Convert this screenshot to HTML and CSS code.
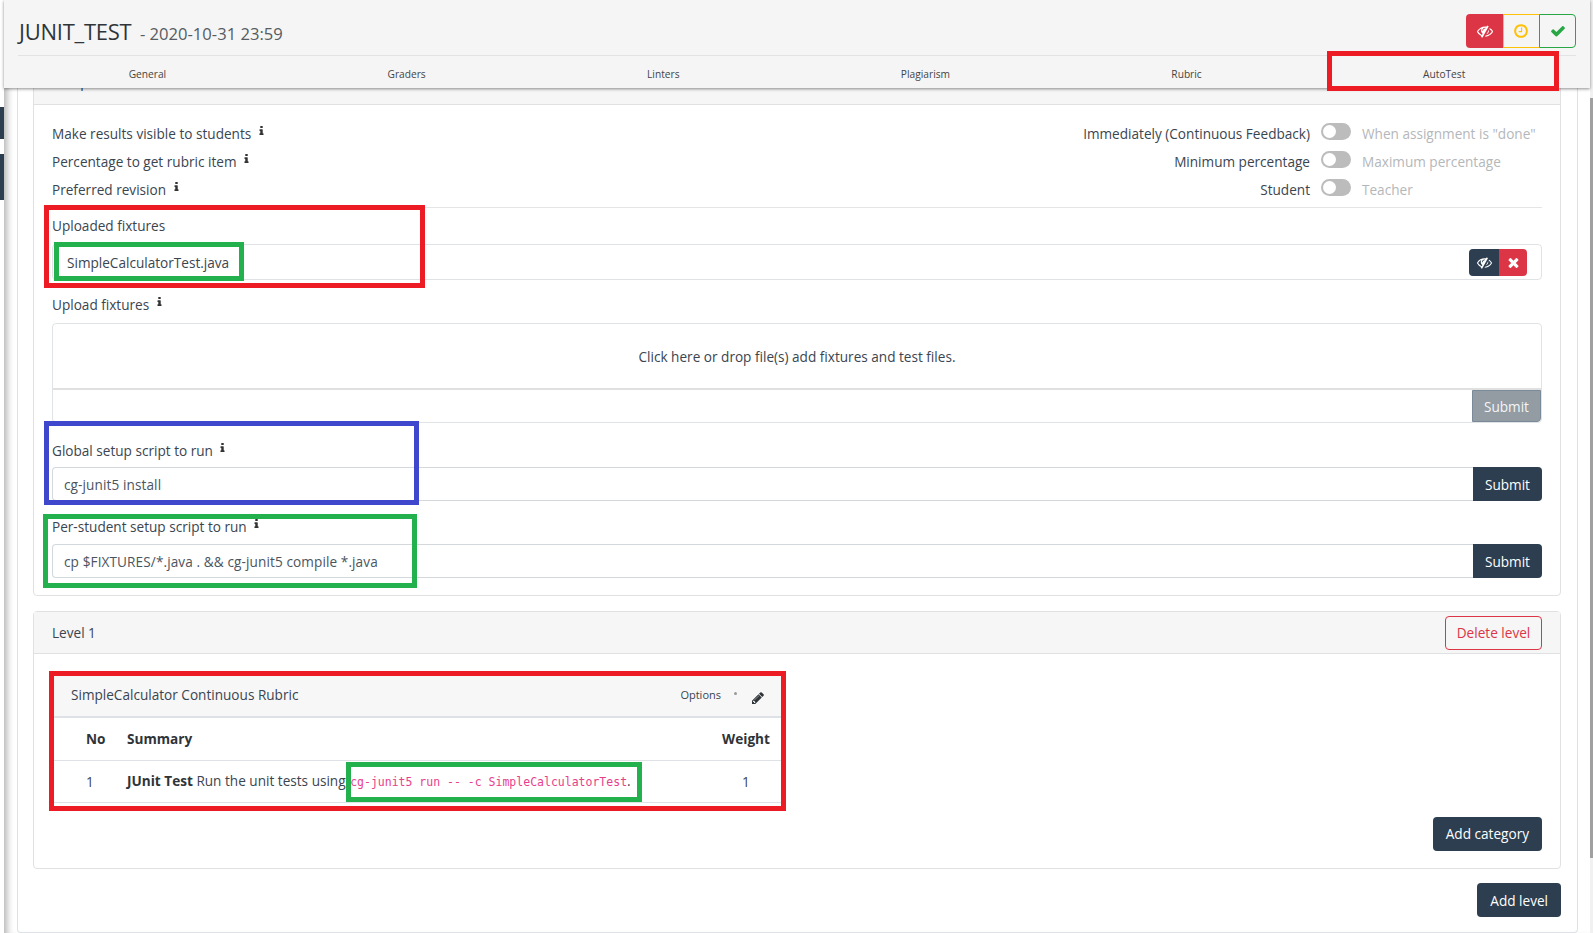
FILE: index.html
```html
<!DOCTYPE html>
<html lang="en">
<head>
    <meta charset="UTF-8">
    <meta name="viewport" content="width=device-width, initial-scale=1.0">
    <title>JUNIT_TEST</title>
    <link rel="stylesheet" href="styles.css">
</head>
<body>
    <svg class="defs" xmlns="http://www.w3.org/2000/svg">
        <symbol id="i-eye-slash" viewBox="0 0 1792 1792"><path d="M555 1335l78-141q-87-63-136-159t-49-203q0-121 61-225-229 117-381 353 167 258 427 375zm389-759q0-20-14-34t-34-14q-125 0-214.5 89.5t-89.5 214.5q0 20 14 34t34 14 34-14 14-34q0-86 61-147t147-61q20 0 34-14t14-34zm363-191q0 7-1 9-105 188-315 566t-316 567l-49 89q-10 16-28 16-12 0-134-70-16-10-16-28 0-12 44-87-143-65-263.5-173t-208.5-245q-20-31-20-69t20-69q153-235 380-371t496-136q89 0 180 17l54-97q10-16 28-16 5 0 18 6t31 15.5 33 18.5 31.5 18.5 19.5 11.5q16 10 16 27zm37 447q0 139-79 253.5t-209 164.5l280-502q8 45 8 84zm448 128q0 35-20 69-39 64-109 145-150 172-347.5 267t-419.5 95l74-132q212-18 392.5-137t301.5-307q-115-179-282-294l63-112q95 64 182.5 153t144.5 184q20 34 20 69z"/></symbol>
        <symbol id="i-clock" viewBox="0 0 1792 1792"><path d="M1024 544v448q0 14-9 23t-23 9h-320q-14 0-23-9t-9-23v-64q0-14 9-23t23-9h224v-352q0-14 9-23t23-9h64q14 0 23 9t9 23zm416 352q0-148-73-273t-198-198-273-73-273 73-198 198-73 273 73 273 198 198 273 73 273-73 198-198 73-273zm224 0q0 209-103 385.5t-279.5 279.5-385.5 103-385.5-103-279.5-279.5-103-385.5 103-385.5 279.5-279.5 385.5-103 385.5 103 279.5 279.5 103 385.5z"/></symbol>
        <symbol id="i-check" viewBox="0 0 1792 1792"><path d="M1671 566q0 40-28 68l-724 724-136 136q-28 28-68 28t-68-28l-136-136-362-362q-28-28-28-68t28-68l136-136q28-28 68-28t68 28l294 295 656-657q28-28 68-28t68 28l136 136q28 28 28 68z"/></symbol>
        <symbol id="i-times" viewBox="0 0 1792 1792"><path d="M1490 1322q0 40-28 68l-136 136q-28 28-68 28t-68-28l-294-294-294 294q-28 28-68 28t-68-28l-136-136q-28-28-28-68t28-68l294-294-294-294q-28-28-28-68t28-68l136-136q28-28 68-28t68 28l294 294 294-294q28-28 68-28t68 28l136 136q28 28 28 68t-28 68l-294 294 294 294q28 28 28 68z"/></symbol>
        <symbol id="i-pencil" viewBox="0 0 1792 1792"><path d="M491 1536l91-91-235-235-91 91v107h128v128h107zm523-928q0-22-22-22-10 0-17 7l-542 542q-7 7-7 17 0 22 22 22 10 0 17-7l542-542q7-7 7-17zm-54-192l416 416-832 832h-416v-416zm683 96q0 53-37 90l-166 166-416-416 166-165q36-38 90-38 53 0 91 38l235 234q37 39 37 91z"/></symbol>
        <symbol id="i-info" viewBox="512 128 768 1408"><path d="M1216 1344v128q0 26-19 45t-45 19h-512q-26 0-45-19t-19-45v-128q0-26 19-45t45-19h64v-384h-64q-26 0-45-19t-19-45v-128q0-26 19-45t45-19h384q26 0 45 19t19 45v576h64q26 0 45 19t19 45zm-128-1152v192q0 26-19 45t-45 19h-256q-26 0-45-19t-19-45v-192q0-26 19-45t45-19h256q26 0 45 19t19 45z"/></symbol>
    </svg>

    <div class="app">
        <div class="sidebar">
            <div class="side-item side-one"></div>
            <div class="side-item side-two"></div>
        </div>

        <div class="main">
            <header class="top">
                <div class="top-row">
                    <h1 class="title">JUNIT_TEST <small>- 2020-10-31 23:59</small></h1>
                    <div class="state-btns">
                        <span class="state state-hidden"><svg class="icon"><use href="#i-eye-slash"/></svg></span>
                        <span class="state state-wait"><svg class="icon"><use href="#i-clock"/></svg></span>
                        <span class="state state-done"><svg class="icon"><use href="#i-check"/></svg></span>
                    </div>
                </div>
                <nav class="tabs">
                    <a>General</a>
                    <a>Graders</a>
                    <a>Linters</a>
                    <a>Plagiarism</a>
                    <a>Rubric</a>
                    <a>AutoTest</a>
                </nav>
            </header>

            <div class="sheet">
                <section class="card card-setup">
                    <div class="card-head card-head-setup">Setup</div>
                    <div class="card-body setup-body">
                        <div class="opt-row">
                            <span class="opt-name">Make results visible to students <svg class="info"><use href="#i-info"/></svg></span>
                            <span class="opt-on">Immediately (Continuous Feedback)</span>
                            <span class="toggle"></span>
                            <span class="opt-off">When assignment is "done"</span>
                        </div>
                        <div class="opt-row">
                            <span class="opt-name">Percentage to get rubric item <svg class="info"><use href="#i-info"/></svg></span>
                            <span class="opt-on">Minimum percentage</span>
                            <span class="toggle"></span>
                            <span class="opt-off">Maximum percentage</span>
                        </div>
                        <div class="opt-row">
                            <span class="opt-name">Preferred revision <svg class="info"><use href="#i-info"/></svg></span>
                            <span class="opt-on">Student</span>
                            <span class="toggle"></span>
                            <span class="opt-off">Teacher</span>
                        </div>

                        <label class="field-label label-uploaded">Uploaded fixtures</label>
                        <div class="file-box">
                            <span class="file-name">SimpleCalculatorTest.java</span>
                            <div class="file-btns">
                                <span class="file-btn file-hide"><svg class="icon"><use href="#i-eye-slash"/></svg></span>
                                <span class="file-btn file-del"><svg class="icon"><use href="#i-times"/></svg></span>
                            </div>
                        </div>

                        <label class="field-label label-upload">Upload fixtures <svg class="info"><use href="#i-info"/></svg></label>
                        <div class="drop">
                            <div class="drop-zone">Click here or drop file(s) add fixtures and test files.</div>
                            <div class="drop-foot"><button class="btn btn-off">Submit</button></div>
                        </div>

                        <label class="field-label label-global">Global setup script to run <svg class="info"><use href="#i-info"/></svg></label>
                        <div class="input-group">
                            <div class="input">cg-junit5 install</div>
                            <button class="btn btn-joined">Submit</button>
                        </div>

                        <label class="field-label label-student">Per-student setup script to run <svg class="info"><use href="#i-info"/></svg></label>
                        <div class="input-group">
                            <div class="input">cp $FIXTURES/*.java . &amp;&amp; cg-junit5 compile *.java</div>
                            <button class="btn btn-joined">Submit</button>
                        </div>
                    </div>
                </section>

                <section class="card card-level">
                    <div class="card-head card-head-level">
                        <span>Level 1</span>
                        <button class="btn btn-danger">Delete level</button>
                    </div>
                    <div class="card-body level-body">
                        <div class="rubric">
                            <div class="rubric-head">
                                <span class="rubric-name">SimpleCalculator Continuous Rubric</span>
                                <span class="rubric-options">Options</span>
                                <span class="rubric-dot"></span>
                                <svg class="pencil"><use href="#i-pencil"/></svg>
                            </div>
                            <table class="rubric-table">
                                <tr>
                                    <th class="col-no">No</th>
                                    <th>Summary</th>
                                    <th class="col-weight">Weight</th>
                                </tr>
                                <tr>
                                    <td class="col-no">1</td>
                                    <td><b>JUnit Test</b> Run the unit tests using <code>cg-junit5 run -- -c SimpleCalculatorTest</code>.</td>
                                    <td class="col-weight">1</td>
                                </tr>
                            </table>
                        </div>
                        <div class="level-foot"><button class="btn">Add category</button></div>
                    </div>
                </section>

                <div class="page-foot"><button class="btn">Add level</button></div>
            </div>
        </div>

        <div class="scrollbar"><div class="scroll-thumb"></div></div>

        <!-- annotation boxes drawn on top of the screenshot -->
        <div class="mark mark-red mark-tab"></div>
        <div class="mark mark-red mark-uploaded"></div>
        <div class="mark mark-green mark-file"></div>
        <div class="mark mark-blue mark-global"></div>
        <div class="mark mark-green mark-student"></div>
        <div class="mark mark-red mark-rubric"></div>
        <div class="mark mark-green mark-code"></div>
    </div>
</body>
</html>
```

FILE: styles.css
```css
* {
    box-sizing: border-box;
}
body {
    margin: 0;
    font-family: "Open Sans", "Liberation Sans", sans-serif;
    font-size: 13.6px;
    line-height: 21px;
    color: #3a4550;
    background: #fff;
}
.defs {
    display: none;
}
.app {
    position: relative;
    display: flex;
    height: 933px;
    overflow: hidden;
}

/* left menu peeking out */
.sidebar {
    width: 4px;
    flex: none;
    padding-top: 107px;
}
.side-item {
    background: #2c3e50;
}
.side-one {
    height: 32px;
    margin-bottom: 15px;
}
.side-two {
    height: 46px;
}

.scrollbar {
    width: 3px;
    flex: none;
    padding-top: 98px;
    background: #f1f1f1;
}
.scroll-thumb {
    height: 760px;
    background: #a0a0a0;
}

.main {
    position: relative;
    flex: 1;
    min-width: 0;
    padding: 0 12px 0 13px;
    box-shadow: inset 8px 0 7px -5px rgba(0, 0, 0, 0.3);
}

/* sticky header */
.top {
    position: absolute;
    top: 0;
    left: 0;
    right: 0;
    z-index: 2;
    height: 88px;
    padding: 0 14px;
    background: #f5f5f5;
    box-shadow: 0 1px 3px rgba(0, 0, 0, 0.45);
}
.top-row {
    display: flex;
    align-items: flex-start;
    justify-content: space-between;
    height: 56px;
    padding-top: 14px;
    border-bottom: 1px solid #e2e3e4;
}
.title {
    margin: 0;
    padding-left: 1px;
    font-size: 22px;
    font-weight: 400;
    line-height: 35px;
    color: #2f3438;
    letter-spacing: -0.25px;
}
.title small {
    margin-left: 3px;
    font-size: 16.6px;
    color: #555c62;
    letter-spacing: 0;
}
.state-btns {
    display: flex;
    height: 34px;
}
.state {
    display: flex;
    align-items: center;
    justify-content: center;
    height: 34px;
    width: 37px;
}
.state-hidden {
    background: #dc3545;
    color: #fff;
    border-radius: 4px 0 0 4px;
}
.state-wait {
    width: 36px;
    padding-right: 2px;
    border: 1px solid #ffc107;
    border-right: 0;
    color: #ffc107;
}
.state-done {
    border: 1px solid #28a745;
    color: #28a745;
    border-radius: 0 4px 4px 0;
}
.icon {
    width: 16px;
    height: 16px;
    fill: currentColor;
}
.tabs {
    display: flex;
    height: 32px;
}
.tabs a {
    flex: 1 1 auto;
    font-size: 10.2px;
    line-height: 36px;
    text-align: center;
    color: #444;
}

.sheet {
    height: 933px;
    padding: 62px 16px 0 15px;
    border: 1px solid #dee2e6;
    border-top: 0;
    border-radius: 0 0 4px 4px;
}
.card {
    border: 1px solid #dfe1e3;
    border-radius: 4px;
    background: #fff;
}
.card-head {
    background: #f6f6f6;
    border-bottom: 1px solid #dfe1e3;
}
.card-head-setup {
    height: 42px;
    padding: 8px 18px;
}
.card-body {
    padding: 0 18px;
}
.setup-body {
    height: 490px;
    padding-top: 14px;
}

.opt-row {
    display: flex;
    align-items: center;
    height: 28px;
}
.opt-name {
    flex: 1;
}
.opt-on {
    text-align: right;
}
.opt-off {
    width: 180px;
    color: #b4b7ba;
}
.toggle {
    position: relative;
    width: 30px;
    height: 17px;
    margin: -3px 11px 0;
    border-radius: 9px;
    background: #bcbcbc;
}
.toggle::before {
    content: "";
    position: absolute;
    top: 2px;
    left: 2px;
    width: 13px;
    height: 13px;
    border-radius: 50%;
    background: #fff;
}
.info {
    width: 5px;
    height: 9px;
    margin-left: 4px;
    vertical-align: 4px;
    fill: #333;
}

.field-label {
    display: block;
    height: 21px;
}
.label-uploaded {
    margin-top: 4px;
    padding-top: 7px;
    height: 34px;
    border-top: 1px solid #e3e5e7;
}
.file-box {
    display: flex;
    align-items: center;
    justify-content: space-between;
    height: 36px;
    margin-top: 3px;
    padding: 0 14px 0 14px;
    border: 1px solid #e0e3e6;
    border-radius: 4px;
}
.file-btns {
    display: flex;
    height: 27px;
}
.file-btn {
    display: flex;
    align-items: center;
    justify-content: center;
    width: 28px;
    color: #fff;
}
.file-hide {
    width: 30px;
    background: #2c3e50;
    border-radius: 4px 0 0 4px;
}
.file-del {
    background: #dc3545;
    border-radius: 0 4px 4px 0;
}
.file-btn .icon {
    width: 15px;
    height: 15px;
}
.label-upload {
    margin-top: 14px;
}
.drop {
    margin-top: 8px;
    border: 1px solid #e0e3e6;
    border-radius: 4px;
}
.drop-zone {
    height: 66px;
    line-height: 66px;
    text-align: center;
    border-bottom: 2px solid #e0e0e0;
}
.drop-foot {
    display: flex;
    justify-content: flex-end;
    height: 32px;
}
.btn {
    height: 34px;
    padding: 0 13px;
    border: 0;
    border-radius: 4px;
    font-family: inherit;
    font-size: 13.6px;
    color: #fff;
    background: #2c3e50;
}
.btn-off {
    width: 69px;
    height: 32px;
    padding: 0;
    border: 1px solid #7b8a99;
    border-radius: 0 0 4px 0;
    background: #939ba3;
    color: #f4f5f6;
}
.btn-joined {
    width: 69px;
    padding: 0;
    border-radius: 0 4px 4px 0;
}
.label-global {
    margin-top: 17px;
}
.label-student {
    margin-top: 15px;
}
.input-group {
    display: flex;
    margin-top: 7px;
}
.label-global + .input-group {
    margin-top: 6px;
}
.input {
    flex: 1;
    height: 34px;
    padding: 0 11px;
    line-height: 34px;
    letter-spacing: 0.1px;
    border: 1px solid #d3d8dd;
    border-right: 0;
    border-radius: 4px 0 0 4px;
    color: #4b555e;
}

.card-level {
    margin-top: 15px;
    height: 258px;
}
.card-head-level {
    display: flex;
    align-items: center;
    justify-content: space-between;
    height: 42px;
    padding: 0 18px;
}
.btn-danger {
    width: 97px;
    height: 34px;
    padding: 0;
    border: 1px solid #dc3545;
    background: transparent;
    color: #dc3545;
}
.level-body {
    padding-top: 22px;
}
.rubric {
    width: 729px;
    margin-left: 2px;
}
.rubric-head {
    display: flex;
    align-items: center;
    height: 42px;
    padding: 0 18px 3px 17px;
    background: #f7f7f7;
    border-bottom: 2px solid #dee2e6;
}
.rubric-name {
    flex: 1;
}
.rubric-options {
    font-size: 11px;
}
.rubric-dot {
    width: 3px;
    height: 3px;
    margin: 0 14px 3px 13px;
    background: #999;
    border-radius: 50%;
}
.pencil {
    width: 14px;
    height: 14px;
    margin-top: 7px;
    fill: #2f3438;
}
.rubric-table {
    width: 100%;
    border-collapse: collapse;
}
.rubric-table th,
.rubric-table td {
    height: 42px;
    padding: 0;
    text-align: left;
    border-bottom: 1px solid #dee2e6;
}
.rubric-table th {
    color: #2f3438;
}
.rubric-table b {
    color: #2f3438;
}
.rubric-table .col-no {
    width: 73px;
    padding-left: 32px;
}
.rubric-table .col-weight {
    width: 67px;
    padding-right: 7px;
    text-align: center;
}
code {
    margin-left: 1px;
    font-family: "DejaVu Sans Mono", "Liberation Mono", monospace;
    font-size: 11.5px;
    color: #e83e8c;
}
.level-foot {
    display: flex;
    justify-content: flex-end;
    margin-top: 14px;
}
.page-foot {
    display: flex;
    justify-content: flex-end;
    margin-top: 14px;
}

/* annotations */
.mark {
    position: absolute;
    z-index: 3;
    border: 5px solid;
    pointer-events: none;
}
.mark-red {
    border-color: #ed1c24;
}
.mark-green {
    border-color: #22b14c;
}
.mark-blue {
    border-color: #3f48cc;
}
.mark-tab {
    left: 1327px;
    top: 51px;
    width: 232px;
    height: 40px;
}
.mark-uploaded {
    left: 44px;
    top: 205px;
    width: 381px;
    height: 83px;
}
.mark-file {
    left: 54px;
    top: 242px;
    width: 190px;
    height: 39px;
}
.mark-global {
    left: 44px;
    top: 421px;
    width: 375px;
    height: 84px;
}
.mark-student {
    left: 43px;
    top: 514px;
    width: 374px;
    height: 74px;
}
.mark-rubric {
    left: 49px;
    top: 671px;
    width: 737px;
    height: 140px;
}
.mark-code {
    left: 346px;
    top: 762px;
    width: 296px;
    height: 40px;
}
```
